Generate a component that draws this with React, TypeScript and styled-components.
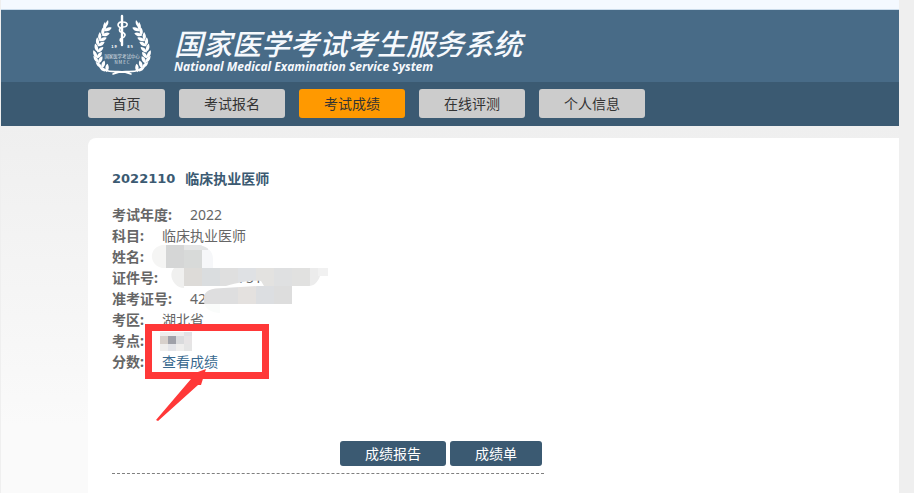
import React from "react";
import styled, { createGlobalStyle } from "styled-components";

const GlobalStyle = createGlobalStyle`
  * { box-sizing: border-box; }
  body {
    margin: 0;
    background: #efefef;
    font-family: "Noto Sans", "Noto Sans CJK SC", sans-serif;
    font-size: 14px;
    color: #666;
  }
`;

const Page = styled.div`
  display: flex;
  flex-direction: column;
  min-height: 100vh;
  margin: 0 15px 0 1px;
`;

const TopStrip = styled.div`
  height: 10px;
  background: #f4f9ff;
  border-bottom: 1px solid #cbdceb;
`;

const Header = styled.header`
  display: flex;
  align-items: flex-start;
  gap: 22px;
  height: 72px;
  padding: 4px 0 0 91px;
  background: #486b87;
  color: #f6f9fd;
`;

const Brand = styled.div`
  padding-top: 10px;
  font-style: italic;
  white-space: nowrap;
`;

const BrandTitle = styled.h1`
  margin: 0;
  font-family: "Noto Sans CJK SC", sans-serif;
  font-size: 29px;
  font-weight: 500;
  line-height: 36px;
`;

const BrandSubtitle = styled.p`
  margin: 0;
  font-family: "Open Sans", sans-serif;
  font-size: 12px;
  font-weight: 700;
  line-height: 14px;
`;

const Nav = styled.nav`
  display: flex;
  gap: 14px;
  padding: 7px 0 8px 87px;
  background: #3b5a72;
`;

const NavLink = styled.a<{ $active?: boolean; $short?: boolean }>`
  width: ${(p) => (p.$short ? "77px" : "106px")};
  border-radius: 3px;
  background: ${(p) => (p.$active ? "#ff9900" : "#cccccc")};
  color: #333;
  line-height: 29px;
  text-align: center;
  text-decoration: none;
`;

const Body = styled.div`
  display: flex;
  flex: 1;
  padding: 12px 0 0 87px;
  background: linear-gradient(#efefef, #fafafa 300px);
`;

const Card = styled.main`
  flex: 1;
  padding: 30px 24px 16px;
  border-radius: 8px 0 0 0;
  background: #fff;
`;

const ExamTitle = styled.h2`
  display: flex;
  gap: 10px;
  margin: 0 0 14px;
  color: #3b5a72;
  font-size: 14px;
  font-weight: 700;
  line-height: 22px;
`;

const ExamCode = styled.span`
  font-family: "DejaVu Sans", sans-serif;
  font-size: 13px;
`;

const Record = styled.div`
  position: relative;
`;

const Fields = styled.dl`
  margin: 0;
`;

const Field = styled.div`
  display: flex;
  gap: 18px;
  line-height: 21px;
  white-space: nowrap;
`;

const Label = styled.dt`
  font-weight: 700;
`;

const Value = styled.dd`
  margin: 0;
`;

const Partial = styled.span`
  padding-left: 62px;
`;

const ScoreLink = styled.a`
  color: #39698f;
  text-decoration: none;
`;

const Annotations = styled.svg`
  position: absolute;
  top: 0;
  left: 0;
  pointer-events: none;
`;

const Actions = styled.div`
  display: flex;
  justify-content: flex-end;
  gap: 4px;
  max-width: 432px;
  margin-top: 69px;
  padding: 0 2px 7px 0;
  border-bottom: 1px dashed #808080;
`;

const ActionButton = styled.button`
  height: 25px;
  padding: 0 25px;
  border: 0;
  border-radius: 3px;
  background: #3b5a72;
  color: #fff;
  font: inherit;
  line-height: 24px;
`;

const leaves = [
  [14, 14, 24], [12, 19, 28], [9, 24, 24], [7, 29, 16], [6, 35, 6],
  [5, 41, -4], [6, 46, -14], [9, 51, -26], [13, 55, -38],
];

const Branch = () => (
  <g fill="#fff">
    {leaves.map(([x, y, angle]) => (
      <g key={y} transform={`translate(${x} ${y}) rotate(${angle}) scale(0.85)`}>
        <path d="M0 3 C-4 2 -5 -2 -4 -6 C-1 -4 1 -1 0 3Z" />
        <path d="M-1 4 C0 0 2 -3 6 -3 C6 1 3 4 -1 4Z" />
      </g>
    ))}
    <path d="M14 12C13 10 14 8 16 6C17 9 16 11 14 13Z" />
  </g>
);

const Emblem = () => (
  <svg width="60" height="62" viewBox="0 0 60 62" role="img" aria-label="国家医学考试中心">
    <Branch />
    <g transform="translate(60 0) scale(-1 1)"><Branch /></g>
    <g fill="none" stroke="#fff" strokeLinecap="round">
      <path d="M30 2V31" strokeWidth="2.4" />
      <path d="M29 14C24 12 26 7 31 8C37 8 36 13 31 13C26 14 27 18 30 18C35 20 33 23 30 24C27 25 28 27 30 28" strokeWidth="1.6" />
      <path d="M13 56C22 60 28 55 39 60M47 56C38 60 32 55 21 60" strokeWidth="1.6" />
    </g>
    <g fill="#fff" textAnchor="middle" fontFamily="Noto Sans CJK SC, sans-serif">
      <text x="22" y="34" fontSize="4" fontWeight="700">1 9</text>
      <text x="38" y="34" fontSize="4" fontWeight="700">8 5</text>
      <text x="30" y="44" fontSize="4.4" opacity="0.8">国家医学考试中心</text>
      <text x="30" y="50" fontSize="4.4" opacity="0.8">N M E C</text>
    </g>
  </svg>
);

const Marks = () => (
  <Annotations width="240" height="220" viewBox="112 204 240 220" aria-hidden="true">
    <defs>
      <clipPath id="nameMask"><path d="M162 245H198C207 246 213 251 213 259V268H162C149 265 148 248 162 245Z" /></clipPath>
      <clipPath id="idMask"><path d="M174 268H328V276H320C318 282 314 286 309 286H264L261 281C250 280 240 282 226 286H184V288C175 288 167 276 174 268Z" /></clipPath>
      <clipPath id="ticketMask"><path d="M204 300C203 291 210 288 224 288L258 286H292V304H220V313C212 313 203 308 204 300Z" /></clipPath>
    </defs>
    <g clipPath="url(#nameMask)" shapeRendering="crispEdges">
      <rect x="148" y="245" width="18" height="24" fill="#f5f5f4" />
      <rect x="166" y="245" width="18" height="24" fill="#d5d6d6" />
      <rect x="184" y="245" width="18" height="24" fill="#d8dad9" />
      <rect x="202" y="245" width="12" height="24" fill="#f6f7f9" />
      <rect x="184" y="245" width="24" height="5" fill="#e4e5e5" />
    </g>
    <g clipPath="url(#idMask)" shapeRendering="crispEdges">
      <rect x="168" y="268" width="16" height="22" fill="#f0f0ef" />
      <rect x="184" y="268" width="18" height="18" fill="#dddbd8" />
      <rect x="202" y="268" width="18" height="18" fill="#dadddf" />
      <rect x="220" y="268" width="18" height="18" fill="#dfdfdf" />
      <rect x="238" y="268" width="18" height="18" fill="#dfe1e4" />
      <rect x="256" y="268" width="18" height="18" fill="#e3e2e0" />
      <rect x="274" y="268" width="18" height="18" fill="#dfe0e1" />
      <rect x="292" y="268" width="18" height="18" fill="#e1e1e0" />
      <rect x="310" y="268" width="10" height="18" fill="#ececec" />
      <rect x="318" y="268" width="10" height="8" fill="#f1f1f1" />
    </g>
    <g clipPath="url(#ticketMask)" shapeRendering="crispEdges">
      <rect x="202" y="286" width="36" height="18" fill="#dededf" />
      <rect x="238" y="286" width="18" height="18" fill="#e4e1df" />
      <rect x="256" y="286" width="18" height="18" fill="#dcdee1" />
      <rect x="274" y="286" width="18" height="18" fill="#dddddd" />
      <rect x="202" y="304" width="18" height="9" fill="#fafcfb" />
    </g>
    <g shapeRendering="crispEdges">
      <rect x="160" y="332" width="32" height="19" fill="#efeeed" />
      <rect x="184" y="332" width="8" height="4" fill="#e1e1e4" />
      <rect x="160" y="336" width="8" height="8" fill="#d7d0cb" />
      <rect x="168" y="336" width="8" height="8" fill="#9fa1a9" />
      <rect x="176" y="336" width="8" height="8" fill="#dadbdd" />
      <rect x="184" y="336" width="8" height="8" fill="#e7e4e5" />
      <rect x="168" y="344" width="8" height="7" fill="#e3e4e8" />
      <rect x="184" y="344" width="8" height="7" fill="#e5e5e5" />
    </g>
    <rect x="148.5" y="327.5" width="117" height="48" fill="none" stroke="#ff3838" strokeWidth="7" />
    <path d="M206 369L187 376L191 379L156 420L158 421L198 385L201 385Z" fill="#ff3838" />
  </Annotations>
);

const fields: { label: string; value?: React.ReactNode }[] = [
  { label: "考试年度:", value: "2022" },
  { label: "科目:", value: "临床执业医师" },
  { label: "姓名:" },
  { label: "证件号:", value: <Partial>751</Partial> },
  { label: "准考证号:", value: "42" },
  { label: "考区:", value: "湖北省" },
  { label: "考点:" },
  { label: "分数:", value: <ScoreLink href="#score">查看成绩</ScoreLink> },
];

export default function App() {
  return (
    <>
      <GlobalStyle />
      <Page>
        <TopStrip />
        <Header>
          <Emblem />
          <Brand>
            <BrandTitle>国家医学考试考生服务系统</BrandTitle>
            <BrandSubtitle>National Medical Examination Service System</BrandSubtitle>
          </Brand>
        </Header>
        <Nav>
          <NavLink href="#home" $short>首页</NavLink>
          <NavLink href="#register">考试报名</NavLink>
          <NavLink href="#results" $active aria-current="page">考试成绩</NavLink>
          <NavLink href="#online">在线评测</NavLink>
          <NavLink href="#profile">个人信息</NavLink>
        </Nav>
        <Body>
          <Card>
            <ExamTitle><ExamCode>2022110</ExamCode><span>临床执业医师</span></ExamTitle>
            <Record>
              <Fields>
                {fields.map((f) => (
                  <Field key={f.label}>
                    <Label>{f.label}</Label>
                    <Value>{f.value}</Value>
                  </Field>
                ))}
              </Fields>
              <Marks />
            </Record>
            <Actions>
              <ActionButton type="button">成绩报告</ActionButton>
              <ActionButton type="button">成绩单</ActionButton>
            </Actions>
          </Card>
        </Body>
      </Page>
    </>
  );
}
